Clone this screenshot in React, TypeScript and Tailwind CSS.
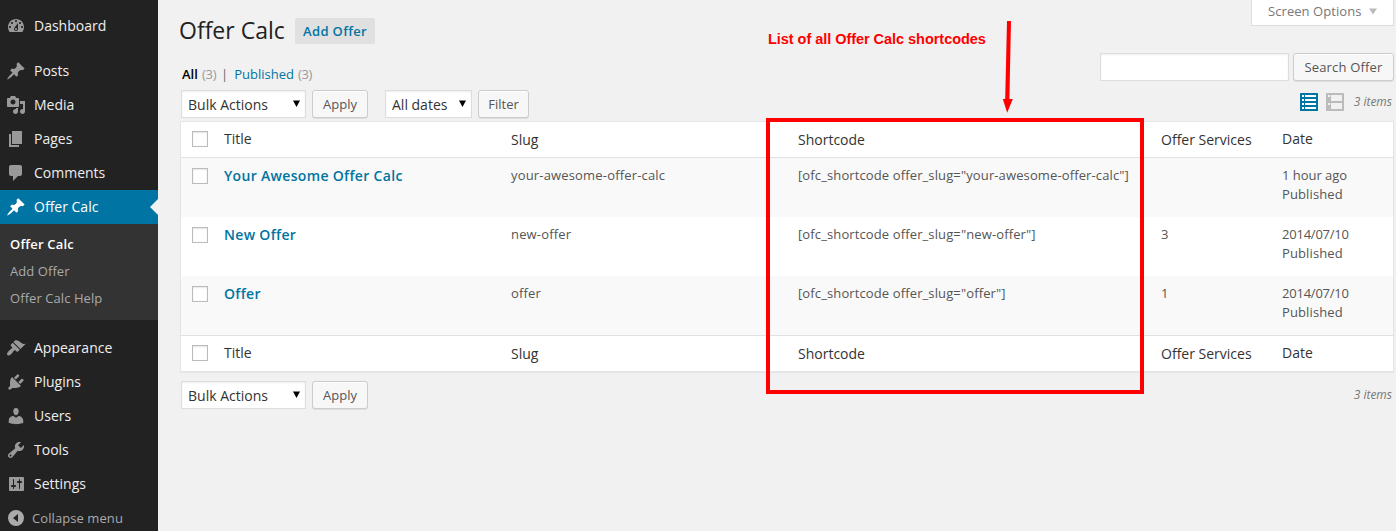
import React from 'react';

const ICONS = {
  dashboard:
    'M3.76 16h12.48c1.1-1.37 1.76-3.11 1.76-5 0-4.42-3.58-8-8-8s-8 3.58-8 8c0 1.89.66 3.63 1.76 5zM10 4c.55 0 1 .45 1 1s-.45 1-1 1-1-.45-1-1 .45-1 1-1zM6 6c.55 0 1 .45 1 1s-.45 1-1 1-1-.45-1-1 .45-1 1-1zm8 0c.55 0 1 .45 1 1s-.45 1-1 1-1-.45-1-1 .45-1 1-1zm-5.37 5.55L12 7v6c0 1.1-.9 2-2 2s-2-.9-2-2c0-.57.24-1.08.63-1.45zM4 10c.55 0 1 .45 1 1s-.45 1-1 1-1-.45-1-1 .45-1 1-1zm12 0c.55 0 1 .45 1 1s-.45 1-1 1-1-.45-1-1 .45-1 1-1zm-5 3c0-.55-.45-1-1-1s-1 .45-1 1 .45 1 1 1 1-.45 1-1z',
  pin: 'M10.44 3.02l1.82-1.82 6.36 6.35-1.83 1.82c-1.05-.68-2.48-.57-3.41.36l-.75.75c-.92.93-1.04 2.35-.35 3.41l-1.83 1.82-2.41-2.41-2.8 2.79c-.42.42-3.38 2.71-3.8 2.29s1.86-3.39 2.28-3.81l2.79-2.79L4.1 9.36l1.83-1.82c1.05.69 2.48.57 3.4-.36l.75-.75c.93-.92 1.05-2.35.36-3.41z',
  media:
    'M13 11V4c0-.55-.45-1-1-1h-1.67L9 1H5L3.67 3H2c-.55 0-1 .45-1 1v7c0 .55.45 1 1 1h10c.55 0 1-.45 1-1zM7 4.5c1.38 0 2.5 1.12 2.5 2.5S8.38 9.5 7 9.5 4.5 8.38 4.5 7 5.62 4.5 7 4.5zM14 6h5v10.5c0 1.38-1.12 2.5-2.5 2.5S14 17.88 14 16.5s1.12-2.5 2.5-2.5c.17 0 .34.02.5.05V9h-3V6zm-4 8.05V13h2v3.5c0 1.38-1.12 2.5-2.5 2.5S7 17.88 7 16.5 8.12 14 9.5 14c.17 0 .34.02.5.05z',
  page: 'M6 15V2h10v13H6zm-1 1h8v2H3V5h2v11z',
  comments:
    'M5 2h9c1.1 0 2 .9 2 2v7c0 1.1-.9 2-2 2h-2l-5 5v-5H5c-1.1 0-2-.9-2-2V4c0-1.1.9-2 2-2z',
  appearance:
    'M14.48 11.06L7.41 3.99l1.5-1.5c.5-.56 2.3-.47 3.51.32 1.21.8 1.43 1.28 2.91 2.1 1.18.64 2.45 1.26 4.45.85zm-.71.71L6.7 4.7 4.93 6.47c-.39.39-.39 1.02 0 1.41l1.06 1.06c.39.39.39 1.03 0 1.42-.6.6-1.43 1.11-2.21 1.69-.35.26-.7.53-1.01.84C1.43 14.23.4 16.08 1.4 17.07c.99 1 2.84-.03 4.18-1.36.31-.31.58-.66.85-1.02.57-.78 1.08-1.61 1.69-2.21.39-.39 1.02-.39 1.41 0l1.06 1.06c.39.39 1.02.39 1.41 0z',
  plugins:
    'M13.11 4.36L9.87 7.6 8 5.73l3.24-3.24c.35-.34 1.05-.2 1.56.32.52.51.66 1.21.31 1.55zm-8 1.77l.91-1.12 9.01 9.01-1.19.84c-.71.71-2.63 1.16-3.82 1.16H6.14L4.9 17.26c-.59.59-1.54.59-2.12 0-.59-.58-.59-1.53 0-2.12l1.24-1.24v-3.88c0-1.13.4-3.19 1.09-3.89zm7.26 3.97l3.24-3.24c.34-.35 1.04-.21 1.55.31.52.51.66 1.21.31 1.55l-3.24 3.25z',
  users:
    'M10 9.25c-2.27 0-2.73-3.44-2.73-3.44C7 4.02 7.82 2 9.97 2c2.16 0 2.98 2.02 2.71 3.81 0 0-.41 3.44-2.68 3.44zm0 2.57L12.72 10c2.39 0 4.52 2.33 4.52 4.53v2.49s-3.65 1.13-7.24 1.13c-3.65 0-7.24-1.13-7.24-1.13v-2.49c0-2.25 1.94-4.48 4.47-4.48z',
  tools:
    'M16.68 9.77c-1.34 1.34-3.3 1.67-4.95.99l-5.41 6.52c-.99.99-2.59.99-3.58 0s-.99-2.59 0-3.57l6.52-5.42c-.68-1.65-.35-3.61.99-4.95 1.28-1.28 3.12-1.62 4.72-1.06l-2.89 2.89 2.82 2.82 2.86-2.87c.53 1.58.18 3.39-1.08 4.65zM3.81 16.21c.4.39 1.04.39 1.43 0 .4-.4.4-1.04 0-1.43-.39-.4-1.03-.4-1.43 0-.39.39-.39 1.03 0 1.43z',
  settings:
    'M18 16V4c0-.55-.45-1-1-1H4c-.55 0-1 .45-1 1v12c0 .55.45 1 1 1h13c.55 0 1-.45 1-1zM8 11h1c.55 0 1 .45 1 1s-.45 1-1 1H8v1.5c0 .28-.22.5-.5.5s-.5-.22-.5-.5V13H6c-.55 0-1-.45-1-1s.45-1 1-1h1V5.5c0-.28.22-.5.5-.5s.5.22.5.5V11zm5-2h-1c-.55 0-1-.45-1-1s.45-1 1-1h1V5.5c0-.28.22-.5.5-.5s.5.22.5.5V7h1c.55 0 1 .45 1 1s-.45 1-1 1h-1v5.5c0 .28-.22.5-.5.5s-.5-.22-.5-.5V9z',
  collapse: 'M10 2a8 8 0 1 0 0 16 8 8 0 0 0 0-16zM12 6v8l-5-4z',
};

type IconName = keyof typeof ICONS;

function Icon({ name, className = 'text-[#999]' }: { name: IconName; className?: string }) {
  return (
    <svg viewBox="0 0 20 20" className={`size-5 shrink-0 ${className}`} fill="currentColor" fillRule="evenodd">
      <path d={ICONS[name]} />
    </svg>
  );
}

function MenuItem({ icon, label }: { icon: IconName; label: string }) {
  return (
    <li className="flex h-[34px] items-center gap-2 pl-1.5 text-sm text-[#eee]">
      <Icon name={icon} />
      <span>{label}</span>
    </li>
  );
}

function Sidebar() {
  return (
    <nav className="w-[158px] shrink-0 bg-[#222] pt-[9px]">
      <ul>
        <MenuItem icon="dashboard" label="Dashboard" />
      </ul>
      <ul className="mt-[11px]">
        <MenuItem icon="pin" label="Posts" />
        <MenuItem icon="media" label="Media" />
        <MenuItem icon="page" label="Pages" />
        <MenuItem icon="comments" label="Comments" />
        <li className="flex h-[34px] items-center gap-2 bg-[#0074a2] pl-1.5 text-sm text-white">
          <Icon name="pin" className="text-white" />
          <span>Offer Calc</span>
          <svg viewBox="0 0 8 16" className="ml-auto h-4 w-2" fill="#f1f1f1">
            <path d="M8 0v16L0 8z" />
          </svg>
        </li>
      </ul>
      <ul className="h-24 bg-[#333] pt-[7px] pl-2.5 text-[13px] leading-[27px] tracking-[0.07px] text-[#aaa]">
        <li className="font-semibold tracking-[0.2px] text-white">Offer Calc</li>
        <li>Add Offer</li>
        <li>Offer Calc Help</li>
      </ul>
      <ul className="mt-[11px]">
        <MenuItem icon="appearance" label="Appearance" />
        <MenuItem icon="plugins" label="Plugins" />
        <MenuItem icon="users" label="Users" />
        <MenuItem icon="tools" label="Tools" />
        <MenuItem icon="settings" label="Settings" />
        <li className="flex h-[34px] items-center gap-1.5 pl-1.5 text-[13px] tracking-[0.08px] text-[#aaa]">
          <Icon name="collapse" className="text-[#aaa]" />
          <span className="pt-0.5">Collapse menu</span>
        </li>
      </ul>
    </nav>
  );
}

function Select({ label, className }: { label: string; className: string }) {
  return (
    <div
      className={`flex h-7 items-center justify-between border border-[#ddd] bg-white pr-[5px] pl-1.5 text-sm text-[#333] shadow-[inset_0_1px_2px_rgba(0,0,0,0.07)] ${className}`}
    >
      <span className="pt-0.5">{label}</span>
      <svg viewBox="0 0 7 7" className="mb-0.5 h-[7px] w-[7px]" fill="#000">
        <path d="M0 0.5h7L3.5 7z" />
      </svg>
    </div>
  );
}

function Button({ label, className = '' }: { label: string; className?: string }) {
  return (
    <button
      className={`h-7 shrink-0 rounded-[3px] border border-[#ccc] bg-[#f7f7f7] text-[13px] leading-[26px] text-[#555] shadow-[inset_0_1px_0_#fff,0_1px_0_rgba(0,0,0,0.08)] ${className}`}
    >
      {label}
    </button>
  );
}

function Checkbox({ className = '' }: { className?: string }) {
  return (
    <span
      className={`ml-[11px] block size-4 border border-[#bbb] bg-white shadow-[inset_0_1px_2px_rgba(0,0,0,0.1)] ${className}`}
    />
  );
}

const COLUMNS = 'grid grid-cols-[43px_287px_287px_363px_121px_1fr]';

function TableHeadings({ className = '' }: { className?: string }) {
  return (
    <div className={`h-[35px] bg-white text-sm leading-[34px] text-[#333] ${COLUMNS} ${className}`}>
      <Checkbox className="mt-[9px]" />
      <span>Title</span>
      <span className="pt-px">Slug</span>
      <span className="pt-px">Shortcode</span>
      <span className="pt-px">Offer Services</span>
      <span>Date</span>
    </div>
  );
}

const OFFERS = [
  { title: 'Your Awesome Offer Calc', slug: 'your-awesome-offer-calc', services: '', date: '1 hour ago' },
  { title: 'New Offer', slug: 'new-offer', services: '3', date: '2014/07/10' },
  { title: 'Offer', slug: 'offer', services: '1', date: '2014/07/10' },
];

function OfferTable() {
  return (
    <div className="mt-[3px] border border-[#e5e5e5] bg-white shadow-[0_1px_1px_rgba(0,0,0,0.04)]">
      <TableHeadings className="border-b border-[#e1e1e1] box-content" />
      {OFFERS.map((o) => (
        <div
          key={o.slug}
          className={`h-[59px] pt-2 text-[13px] leading-[19px] text-[#555] odd:bg-white even:bg-[#f9f9f9] ${COLUMNS}`}
        >
          <Checkbox className="mt-0.5" />
          <span className="text-sm leading-5 font-semibold tracking-[0.32px] text-[#0074a2]">{o.title}</span>
          <span className="tracking-[0.17px]">{o.slug}</span>
          <span className="tracking-[0.12px]">{`[ofc_shortcode offer_slug="${o.slug}"]`}</span>
          <span>{o.services}</span>
          <span>
            <span className={o.date.includes('/') ? 'tracking-[-0.22px]' : 'tracking-[-0.04px]'}>{o.date}</span>
            <br />
            <span className="tracking-[0.12px]">Published</span>
          </span>
        </div>
      ))}
      <TableHeadings className="border-t border-[#e1e1e1] box-content" />
    </div>
  );
}

function ItemCount() {
  return <span className="text-xs text-[#777] italic">3 items</span>;
}

function Annotation() {
  return (
    <>
      <div className="absolute top-[30px] left-[768px] font-['Liberation_Sans',Arial,sans-serif] text-[14.5px] leading-[18px] font-bold tracking-[-0.04px] text-[#f00]">
        List of all Offer Calc shortcodes
      </div>
      <svg viewBox="0 0 12 92" className="absolute top-[21px] left-[1002px] h-[92px] w-3" fill="#f00">
        <path d="M5 0h4L7.4 78H10.8L5.2 91.8 0.8 78h2.4z" />
      </svg>
      <div className="absolute top-[118px] left-[766px] h-[276px] w-[378px] border-4 border-[#f00]" />
    </>
  );
}

export default function App() {
  return (
    <div className="relative flex h-[531px] w-[1396px] overflow-hidden bg-[#f1f1f1] font-['Open_Sans',sans-serif] whitespace-nowrap">
      <Sidebar />
      <main className="flex-1 pr-0.5 pl-[22px]">
        <div className="flex h-[53px] items-start">
          <h1 className="-ml-px mt-[14px] w-[106px] text-[23px] leading-8 text-[#222]">Offer Calc</h1>
          <a className="mt-[18px] ml-2.5 h-[26px] w-20 rounded-[2px] bg-[#e0e0e0] pl-2 text-[13px] leading-[26px] font-semibold tracking-[0.35px] text-[#0074a2]">
            Add Offer
          </a>
          <div className="ml-auto flex h-[26px] w-[143px] items-center border border-t-0 border-[#ddd] bg-white pb-[3px] pl-4 text-[13px] text-[#777]">
            <span className="pt-px tracking-[0.07px]">Screen Options</span>
            <svg viewBox="0 0 8 7" className="ml-[7px] h-[7px] w-2" fill="#bbb">
              <path d="M0 0.5h8L4 6.5z" />
            </svg>
          </div>
        </div>
        <div className="flex h-[37px] items-start">
          <div className="mt-[11px] flex pl-0.5 text-[13px] leading-5 text-[#999]">
            <b className="w-[16px] font-semibold text-black">All</b>
            <span className="ml-1 w-[14px] tracking-[-0.3px]">(3)</span>
            <span className="ml-[5px] text-[#666]">|</span>
            <span className="ml-[6px] text-[#0074a2]">Published</span>
            <span className="ml-1 tracking-[-0.3px]">(3)</span>
          </div>
          <div className="ml-auto flex gap-1">
            <div className="h-7 w-[189px] border border-[#ddd] bg-white shadow-[inset_0_1px_2px_rgba(0,0,0,0.07)]" />
            <Button label="Search Offer" className="w-[101px] tracking-[0.18px]" />
          </div>
        </div>
        <div className="flex h-7 items-center pl-px">
          <Select label="Bulk Actions" className="w-[125px]" />
          <Button label="Apply" className="ml-1.5 w-14" />
          <Select label="All dates" className="ml-[17px] w-[87px]" />
          <Button label="Filter" className="ml-1.5 w-[51px]" />
          <div className="ml-auto flex items-center pr-0.5 pb-1">
            <svg viewBox="0 0 18 18" className="size-[18px]">
              <rect width="18" height="18" rx="0.5" fill="#0074a2" />
              <path
                fill="#fff"
                d="M2 2h2v2H2zM5 2h11v2H5zM2 6h2v2H2zM5 6h11v2H5zM2 10h2v2H2zM5 10h11v2H5zM2 14h2v2H2zM5 14h11v2H5z"
              />
            </svg>
            <svg viewBox="0 0 18 18" className="mr-2.5 ml-2 size-[18px]">
              <rect width="18" height="18" rx="0.5" fill="#bbb" />
              <path fill="#f1f1f1" d="M2 2h2v2H2zM5 2h11v6H5zM2 10h2v2H2zM5 10h11v6H5z" />
            </svg>
            <ItemCount />
          </div>
        </div>
        <OfferTable />
        <div className="mt-[9px] flex h-7 items-center pl-px">
          <Select label="Bulk Actions" className="w-[125px]" />
          <Button label="Apply" className="ml-1.5 w-14" />
          <div className="ml-auto pr-0.5 pb-1">
            <ItemCount />
          </div>
        </div>
      </main>
      <Annotation />
    </div>
  );
}
